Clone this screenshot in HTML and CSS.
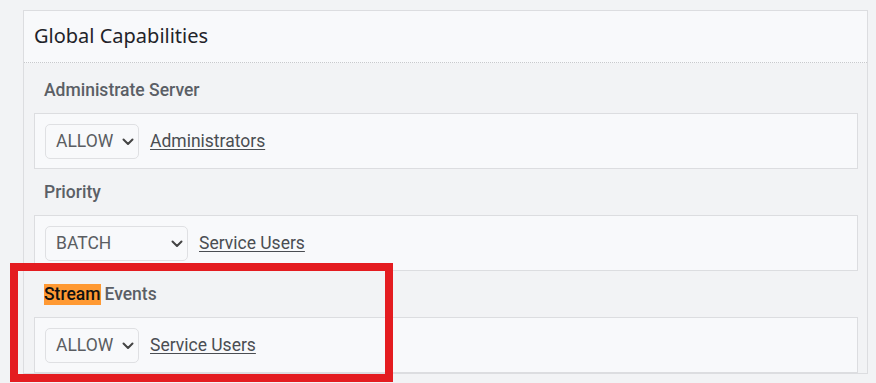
FILE: index.html
```html
<!DOCTYPE html>
<html>
<head>
<meta charset="utf-8">
<link rel="stylesheet" href="styles.css">
</head>
<body>
<div class="page">
  <div class="panel">
    <div class="panel-head">Global Capabilities</div>
    <div class="panel-body">
      <div class="cap first">
        <div class="cap-label">Administrate Server</div>
        <div class="cap-box">
          <div class="sel sel-short"><span>ALLOW</span><svg class="chev" width="12" height="8" viewBox="0 0 12 8"><path d="M1.5 1.5 L6 6 L10.5 1.5" fill="none" stroke="#444" stroke-width="2" stroke-linecap="round" stroke-linejoin="round"/></svg></div>
          <a class="grp" href="#">Administrators</a>
        </div>
      </div>
      <div class="cap">
        <div class="cap-label">Priority</div>
        <div class="cap-box">
          <div class="sel sel-long"><span>BATCH</span><svg class="chev" width="12" height="8" viewBox="0 0 12 8"><path d="M1.5 1.5 L6 6 L10.5 1.5" fill="none" stroke="#444" stroke-width="2" stroke-linecap="round" stroke-linejoin="round"/></svg></div>
          <a class="grp" href="#">Service Users</a>
        </div>
      </div>
      <div class="cap">
        <div class="cap-label"><mark class="hl">Stream</mark> Events</div>
        <div class="cap-box">
          <div class="sel sel-short"><span>ALLOW</span><svg class="chev" width="12" height="8" viewBox="0 0 12 8"><path d="M1.5 1.5 L6 6 L10.5 1.5" fill="none" stroke="#444" stroke-width="2" stroke-linecap="round" stroke-linejoin="round"/></svg></div>
          <a class="grp" href="#">Service Users</a>
        </div>
      </div>
    </div>
  </div>
  <div class="callout"></div>
</div>
</body>
</html>
```
FILE: styles.css
```css
html, body {
  margin: 0;
  padding: 0;
  background: #f2f3f5;
}
.page {
  position: relative;
  padding: 10px 8px 0 23px;
  height: 383px;
  box-sizing: border-box;
  overflow: hidden;
  font-family: Roboto, "Liberation Sans", sans-serif;
}
.panel {
  border: 1px solid #dcdde0;
  background: #f2f3f5;
}
.panel-head {
  height: 52px;
  box-sizing: border-box;
  padding: 0 10px 2px;
  display: flex;
  align-items: center;
  background: #f8f9fb;
  border-bottom: 1px dotted #c8c9cc;
  font-family: "Noto Sans", "Open Sans", sans-serif;
  font-size: 20px;
  color: #1f2329;
}
.panel-body {
  padding: 0 9px 0 10px;
}
.cap-label {
  height: 46px;
  display: flex;
  align-items: center;
  padding-left: 10px;
  font-size: 17.5px;
  font-weight: 500;
  color: #5b5f66;
}
.cap.first .cap-label {
  height: 50px;
  padding-top: 4px;
  box-sizing: border-box;
}
.hl {
  background: #ff9933;
  color: #111;
  padding: 0;
  line-height: 21px;
  display: inline-block;
  margin-right: 4px;
}
.cap-box {
  height: 56px;
  box-sizing: border-box;
  border: 1px solid #dcdde0;
  background: #f8f9fb;
  padding: 10px;
  display: flex;
  align-items: center;
  gap: 11px;
}
.sel {
  height: 35px;
  box-sizing: border-box;
  border: 1px solid #dfe0e3;
  border-radius: 5px;
  background: #f8f9fb;
  display: flex;
  align-items: center;
  justify-content: space-between;
  padding: 0 4px 0 10px;
  font-size: 17.5px;
  color: #5a5d62;
}
.sel-short { width: 94px; }
.sel-long { width: 143px; }
.chev { margin-top: 1px; }
.grp {
  font-size: 17.5px;
  color: #4a4d52;
  text-decoration: underline;
  text-underline-offset: 2px;
}
.callout {
  position: absolute;
  left: 10px;
  top: 263px;
  width: 383px;
  height: 119px;
  box-sizing: border-box;
  border: 8px solid #e41c20;
}
```
